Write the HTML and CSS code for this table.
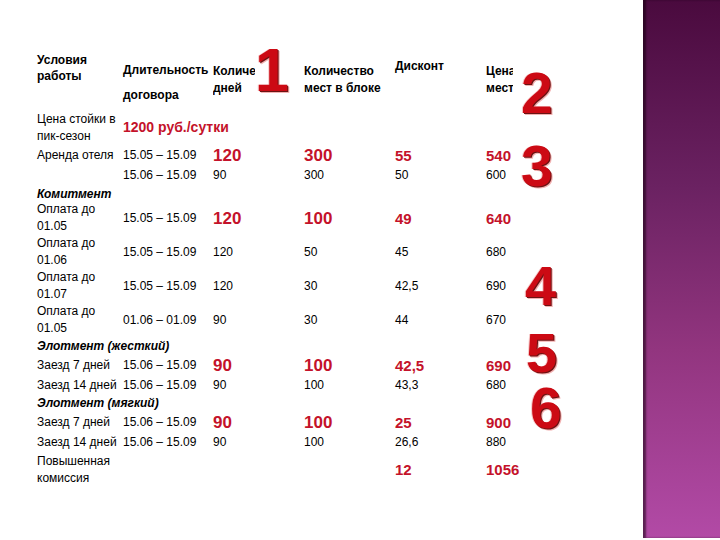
FILE: index.html
```html
<!DOCTYPE html>
<html lang="ru">
<head>
<meta charset="utf-8">
<title>Условия работы</title>
<link rel="stylesheet" href="styles.css">
</head>
<body>
<div class="page">
  <main class="content">
    <div class="table">
      <div class="row head">
        <div class="h1">Условия<br>работы</div>
        <div class="h2"><div>Длительность</div><div class="h2b">договора</div></div>
        <div class="h3 clip w40">Количество<br>дней</div>
        <div class="h3">Количество<br>мест в блоке</div>
        <div class="h5">Дисконт</div>
        <div class="h3 clip w27">Цена<br>места</div>
      </div>
      <div class="row r35">
        <div class="two">Цена стойки в<br>пик-сезон</div>
        <div class="price">1200 руб./сутки</div>
      </div>
      <div class="row r20">
        <div>Аренда отеля</div><div>15.05 – 15.09</div><div class="big">120</div><div class="big">300</div><div class="mid">55</div><div class="mid">540</div>
      </div>
      <div class="row r21">
        <div></div><div>15.06 – 15.09</div><div>90</div><div>300</div><div>50</div><div>600</div>
      </div>
      <div class="row r15"><div class="sect">Комитмент</div></div>
      <div class="row r34">
        <div class="two">Оплата до<br>01.05</div><div>15.05 – 15.09</div><div class="big">120</div><div class="big">100</div><div class="mid">49</div><div class="mid">640</div>
      </div>
      <div class="row r34">
        <div class="two">Оплата до<br>01.06</div><div>15.05 – 15.09</div><div>120</div><div>50</div><div>45</div><div>680</div>
      </div>
      <div class="row r34">
        <div class="two">Оплата до<br>01.07</div><div>15.05 – 15.09</div><div>120</div><div>30</div><div>42,5</div><div>690</div>
      </div>
      <div class="row r34">
        <div class="two">Оплата до<br>01.05</div><div>01.06 – 01.09</div><div>90</div><div>30</div><div>44</div><div>670</div>
      </div>
      <div class="row r18"><div class="sect">Элотмент (жесткий)</div></div>
      <div class="row r21">
        <div>Заезд 7 дней</div><div>15.06 – 15.09</div><div class="big">90</div><div class="big">100</div><div class="mid">42,5</div><div class="mid">690</div>
      </div>
      <div class="row r19">
        <div>Заезд 14 дней</div><div>15.06 – 15.09</div><div>90</div><div>100</div><div>43,3</div><div>680</div>
      </div>
      <div class="row r17"><div class="sect">Элотмент (мягкий)</div></div>
      <div class="row r21">
        <div>Заезд 7 дней</div><div>15.06 – 15.09</div><div class="big">90</div><div class="big">100</div><div class="mid">25</div><div class="mid">900</div>
      </div>
      <div class="row r18">
        <div>Заезд 14 дней</div><div>15.06 – 15.09</div><div>90</div><div>100</div><div>26,6</div><div>880</div>
      </div>
      <div class="row r37">
        <div class="two">Повышенная<br>комиссия</div><div></div><div></div><div></div><div class="mid">12</div><div class="mid">1056</div>
      </div>
    </div>
    <span class="num n1">1</span>
    <span class="num n2">2</span>
    <span class="num n3">3</span>
    <span class="num n4">4</span>
    <span class="num n5">5</span>
    <span class="num n6">6</span>
  </main>
  <aside class="side"></aside>
</div>
</body>
</html>
```

FILE: styles.css
```css
* { box-sizing: border-box; }
html, body { margin: 0; padding: 0; background: #fff; }
body {
  font-family: "Liberation Sans", Arial, sans-serif;
  font-size: 12px;
  color: #000;
  width: 720px;
  height: 540px;
  overflow: hidden;
}
.page {
  display: flex;
  height: 538px;
}
.content {
  flex: 1;
  position: relative;
  padding: 50px 0 0 37px;
}
.side {
  width: 77px;
  background: linear-gradient(180deg, #4a0a3e 0%, #6b2262 35%, #92357f 65%, #b24aa6 100%);
  box-shadow: inset 3px 0 2px rgba(20, 0, 15, 0.55);
}
.row {
  display: grid;
  grid-template-columns: 86px 90px 91px 91px 91px 120px;
  align-items: center;
  line-height: 17px;
  white-space: nowrap;
}
.head { height: 60px; align-items: start; font-weight: bold; }
.head > div { line-height: 16px; }
.h1 { padding-top: 2px; }
.h2 { padding-top: 12px; }
.h2b { margin-top: 9px; }
.h3 { padding-top: 13px; line-height: 17px !important; }
.h5 { padding-top: 8px; }
.clip { overflow: hidden; }
.w40 { width: 42px; }
.w27 { width: 27px; }
.r35 { height: 35px; }
.r20 { height: 20px; }
.r21 { height: 21px; }
.r15 { height: 15px; }
.r34 { height: 34px; }
.r18 { height: 18px; }
.r19 { height: 19px; }
.r17 { height: 17px; }
.r37 { height: 37px; }
.price {
  grid-column: 2 / 7;
  color: #c4122a;
  font-weight: bold;
  font-size: 14px;
}
.sect {
  grid-column: 1 / 7;
  font-weight: bold;
  font-style: italic;
}
.big { color: #c4122a; font-weight: bold; font-size: 17px; }
.mid { color: #c4122a; font-weight: bold; font-size: 15px; }
.num {
  position: absolute;
  font-family: "Liberation Sans", Arial, sans-serif;
  font-weight: bold;
  line-height: 1;
  color: #cc0a14;
  text-shadow: 1px 1px 0 #6a1414, 2px 2px 0 #f2b2b2, -1px 0 0 #f6c8c8;
}
.n1 { font-size: 61px; left: 255px; top: 40px; }
.n2 { font-size: 57px; left: 521px; top: 65px; }
.n3 { font-size: 57px; left: 521px; top: 138px; }
.n4 { font-size: 56px; left: 525px; top: 258px; }
.n5 { font-size: 56px; left: 526px; top: 325px; }
.n6 { font-size: 57px; left: 530px; top: 380px; }
```
